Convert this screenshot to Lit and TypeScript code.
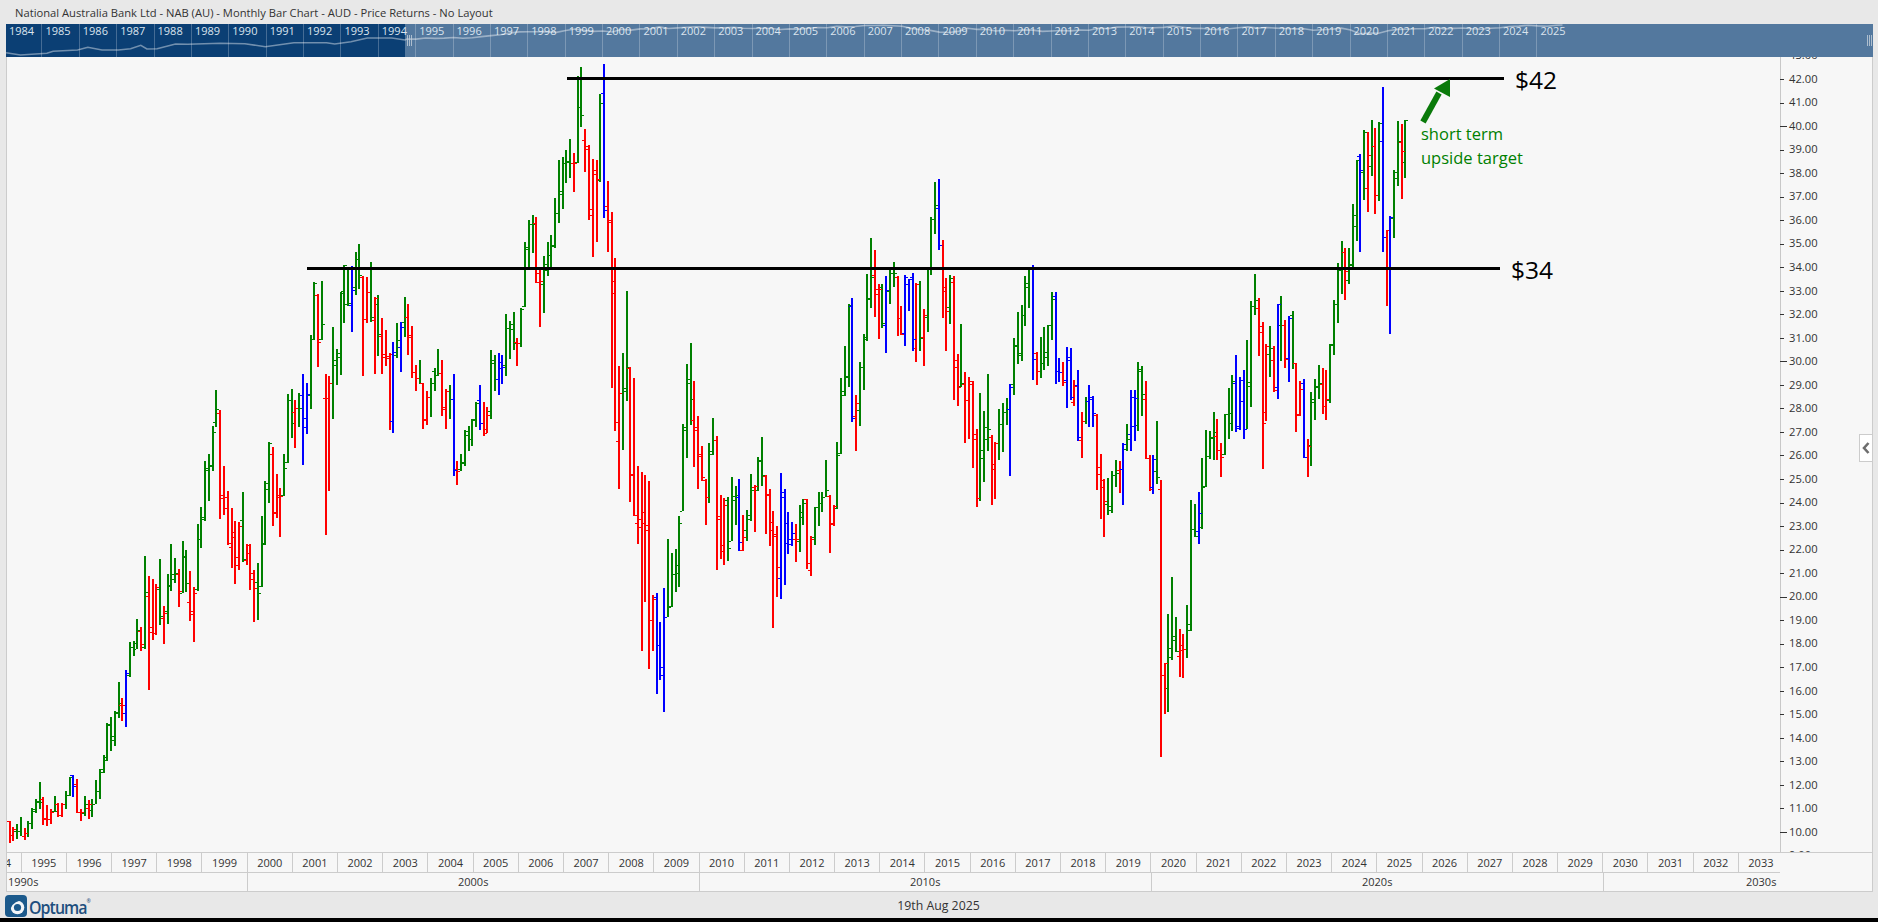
import { LitElement, html, css, svg } from "lit";
import { customElement } from "lit/decorators.js";

interface Seg { x0: number; y0: number; sy: number; d: string; }
const SEGS: Seg[] = [
{ x0: 0, y0: 380, sy: 3, d: `
30 r 1322 1390 1322 1365
39 r 1342 1382 1365 1348
51 g 1332 1376 1352 1352
63 g 1312 1368 1352 1368
75 r 1344 1380 1368 1358
84 g 1324 1370 1358 1328
96 g 1284 1346 1328 1286
108 g 1258 1300 1292 1262
120 g 1206 1288 1265 1265
129 r 1252 1334 1258 1314
141 r 1276 1338 1318 1318
153 r 1288 1332 1318 1296
165 g 1248 1296 1294 1292
174 r 1270 1312 1272 1306
186 r 1270 1312 1306 1272
198 g 1232 1286 1272 1246
210 g 1190 1248 1246 1192
219 b 1186 1250 1186 1218
231 r 1198 1298 1212 1296
243 r 1288 1322 1296 1296
255 g 1248 1308 1298 1272
267 r 1260 1316 1284 1272
276 g 1258 1310 1290 1272
288 g 1200 1272 1272 1234
300 g 1168 1256 1234 1168
312 g 1126 1178 1176 1130
321 g 1030 1144 1140 1032
333 g 1012 1112 1034 1068
345 g 994 1098 1080 996
357 g 906 1014 998 970
366 r 954 1022 976 976
378 b 870 1040 998 880
390 g 786 892 884 800
402 g 784 828 800 788
411 g 718 808 806 750
423 r 742 812 752 792
435 g 528 806 802 636
447 r 588 930 648 756
459 r 598 780 742 760
468 r 612 764 760 622
480 g 538 734 626 708
492 r 678 792 714 698
504 g 582 732 692 616
513 g 492 632 618 598
525 g 534 608 582 578
537 r 568 680 582 632
549 g 484 640 638 528
558 g 510 636 532 608
570 r 574 722 666 692
582 r 622 786 702 638
594 g 432 632 628 476
603 g 382 504 476 412
615 g 244 422 418 270
627 g 222 362 264 258
639 g 138 272 256 156
648 g 30 140 126 86
660 r 90 416 98 354
672 r 258 404 344 384
684 r 334 494 350 490
696 r 384 564 500 456
705 r 424 612 470 554
717 r 426 570 530 438
729 g 336 546 420 536
741 r 492 554 540 494
750 r 492 630 518 598
762 r 570 726 578 624
774 g 550 720 606 638
786 g 408 620 618 488
795 g 304 496 492 308
807 g 186 368 326 188
819 r 202 438 222 398
831 r 282 414 396 344
840 r 324 470 352 348
852 g 222 348 344 264
864 g 42 248 246 60
876 g 28 174 60 128
885 r 60 204 96 84
897 g 40 140 84 84
` },
{ x0: 290, y0: 60, sy: 3, d: `
39 b 942 1215 1004 1100
51 b 968 1122 1074 1002
63 g 826 1048 1006 838
73 g 666 840 836 668
84 r 702 920 706 846
96 g 664 840 836 792
108 r 942 1425 1014 1014
117 r 948 1293 1014 968
129 g 802 1076 968 900
141 g 868 974 914 880
153 g 696 944 890 700
162 g 616 788 692 616
174 g 626 738 732 728
186 b 618 816 734 690
198 g 576 704 680 596
207 g 552 686 596 645
219 r 648 948 650 776
231 r 652 788 776 696
243 g 606 786 696 772
255 r 712 942 780 714
264 g 706 888 732 822
276 r 774 942 828 890
288 r 810 918 882 894
300 r 880 1110 888 882
309 b 846 1118 1082 876
321 g 790 894 886 840
333 b 786 936 860 800
345 g 712 830 786 772
354 r 732 884 770 830
366 r 798 954 826 936
378 r 916 992 936 954
390 g 900 972 954 968
399 r 970 1106 970 1080
411 r 994 1094 1076 1012
423 g 954 1070 1012 968
435 g 924 992 932 946
444 g 868 948 944 940
456 r 900 1068 938 1040
468 r 988 1106 1046 992
480 g 976 1076 992 1018
492 b 942 1248 1018 1230
501 r 1204 1275 1228 1232
513 g 1182 1232 1228 1210
525 g 1110 1218 1206 1124
537 g 1098 1172 1112 1136
546 g 1078 1158 1136 1080
558 g 1026 1100 1076 1030
570 b 976 1110 1020 1090
582 r 1026 1128 1090 1120
591 r 1040 1118 1106 1064
603 g 870 1076 1052 910
615 g 884 992 900 956
627 b 880 1004 956 906
636 b 886 972 924 920
648 g 762 948 914 804
660 g 784 896 804 808
672 g 756 870 792 848
681 r 834 918 846 848
693 g 744 860 848 746
705 g 546 740 738 562
717 g 480 622 566 492
729 g 466 578 492 492
738 r 472 668 488 666
750 r 626 800 638 664
762 g 588 758 672 612
774 g 546 648 630 586
783 g 526 622 586 558
795 g 414 564 554 458
807 g 300 488 458 392
819 g 292 446 402 308
828 g 270 368 308 306
840 g 238 354 304 310
852 r 278 396 308 308
864 g 48 308 306 140
873 g 22 200 142 164
885 r 208 336 240 266
897 r 256 480 258 446
909 r 298 590 466 342
921 r 300 546 330 356
930 g 102 366 360 128
942 b 12 474 100 450
954 r 364 576 438 486
` },
{ x0: 590, y0: 230, sy: 3, d: `
66 r -54 474 -30 152
75 r 84 602 188 576
87 r 408 776 632 488
99 g 370 660 488 482
111 g 184 512 474 410
120 r 412 816 414 732
132 r 444 858 736 854
144 r 708 942 878 866
156 r 726 1262 892 846
165 r 736 1116 880 900
177 r 752 1316 886 1170
189 r 1096 1262 1170 1108
201 b 1090 1392 1102 1244
210 b 1176 1350 1244 1310
222 b 1074 1446 1334 1160
234 g 928 1162 1160 1128
246 g 970 1132 1130 1032
258 g 958 1086 1032 1004
267 g 858 1070 1030 878
279 g 582 844 842 600
291 g 402 684 590 446
303 g 340 584 458 506
312 r 454 710 570 590
324 r 558 776 600 672
336 r 648 752 678 740
348 r 748 884 750 802
357 g 640 818 800 662
369 g 564 674 672 630
381 r 618 1020 630 858
393 r 796 986 866 946
402 r 804 1004 964 824
414 g 802 992 810 954
426 g 742 934 932 810
438 g 768 884 798 796
447 b 748 962 802 936
459 r 856 962 960 920
471 g 840 932 900 856
483 g 732 872 868 780
495 r 766 906 770 768
504 g 682 782 780 692
516 g 622 768 690 734
528 r 736 912 738 792
540 r 778 948 794 876
549 r 844 1194 900 918
561 r 888 1102 912 1010
573 b 730 1106 1044 786
585 b 778 1064 802 940
594 b 846 972 880 942
606 b 876 948 928 910
618 r 882 996 926 926
630 g 826 966 934 862
639 g 808 884 846 818
651 r 808 1016 808 1000
663 r 918 1038 1020 928
675 g 830 944 922 832
687 g 786 888 832 818
696 g 786 846 818 800
708 g 690 802 800 780
720 r 796 968 798 878
732 r 826 888 882 828
741 g 636 836 834 674
753 g 444 672 668 482
765 g 348 498 494 438
777 g 222 470 440 226
786 b 204 576 228 564
798 r 496 662 558 518
810 g 396 588 540 412
822 g 312 480 412 322
831 g 132 332 326 206
843 g 24 234 204 140
855 r 60 262 134 192
867 r 162 326 178 176
876 g 162 294 170 278
888 b 138 368 284 180
900 g 112 222 182 130
912 g 96 172 130 130
924 r 138 318 140 264
933 r 228 316 264 312
945 b 136 348 310 140
` },
{ x0: 890, y0: 170, sy: 3, d: `
57 b 326 422 342 328
69 b 310 542 322 506
78 r 340 576 534 342
90 g 334 542 342 504
102 r 418 588 502 434
114 g 298 486 442 298
123 g 142 314 298 146
135 g 36 192 146 104
147 b 28 240 114 224
159 r 210 444 224 364
168 r 324 542 352 422
180 g 316 462 412 324
192 r 318 690 336 570
204 r 552 708 590 650
213 g 462 650 648 638
225 r 606 818 642 690
237 r 622 806 690 634
249 r 632 894 642 806
261 r 778 1010 792 984
270 g 670 992 984 840
282 g 724 936 864 772
294 g 612 842 806 776
306 r 796 1004 800 882
315 r 816 986 896 818
327 g 716 870 818 762
339 g 700 846 762 726
351 g 684 764 726 716
360 b 642 918 716 652
372 g 504 674 642 526
384 g 426 582 528 550
396 g 406 572 556 436
405 g 318 468 436 338
417 g 298 414 350 298
429 b 285 630 296 566
441 r 546 644 550 602
453 g 500 624 602 578
462 g 470 600 578 560
474 g 466 588 546 466
486 g 366 510 464 386
498 b 366 642 378 604
507 b 564 636 604 606
519 r 576 648 606 636
531 b 532 714 630 560
543 b 534 690 570 680
552 r 630 708 696 648
564 b 600 812 646 800
576 r 726 864 810 754
588 g 682 762 752 692
597 b 644 770 694 688
609 b 678 770 680 728
621 r 732 960 734 912
633 r 852 1046 890 952
642 r 928 1100 930 992
654 g 924 1034 1002 1008
666 g 904 1030 1020 916
678 g 870 950 916 908
690 r 874 968 900 898
699 b 820 1004 896 822
711 g 762 842 836 806
723 b 660 842 792 680
735 b 660 812 768 684
744 g 576 782 764 596
756 g 588 738 604 672
768 r 634 866 688 864
780 r 856 962 864 958
789 b 856 972 952 866
801 g 754 942 902 920
` },
{ x0: 1140, y0: 80, sy: 2.2725, d: `
63 r 910 1538 930 1352
75 r 1324 1440 1352 1326
84 g 1214 1436 1382 1290
96 g 1130 1318 1312 1272
108 g 1220 1300 1264 1298
120 r 1248 1356 1310 1284
129 r 1258 1358 1296 1294
141 g 1192 1314 1292 1250
153 g 954 1252 1236 1020
165 g 964 1038 1020 1036
177 b 936 1054 1026 984
186 g 860 1020 1016 926
198 g 796 924 922 854
210 g 798 862 854 814
222 g 754 864 812 800
231 r 770 864 810 840
243 r 826 902 840 856
255 g 758 852 850 760
267 g 700 816 758 756
276 g 670 798 780 684
288 b 626 800 688 786
300 b 674 796 790 730
312 b 658 816 682 792
321 g 590 794 792 696
333 g 502 744 686 514
345 g 440 534 514 500
357 r 496 628 518 572
369 r 550 884 558 780
378 r 600 776 754 604
390 g 560 674 622 608
402 r 604 710 636 704
414 b 508 726 698 510
423 g 490 638 556 556
435 r 546 654 556 634
447 b 536 686 632 540
459 g 526 656 534 642
468 r 642 800 644 762
480 r 684 764 758 702
492 b 680 860 688 856
504 r 816 902 856 832
513 g 710 878 830 724
525 g 680 772 732 696
537 g 648 726 698 688
549 r 654 758 690 740
558 r 660 772 740 724
570 g 600 734 728 602
582 g 500 626 600 510
594 g 416 552 510 432
606 g 366 486 428 390
615 r 382 500 390 434
627 g 382 464 454 418
639 g 282 428 420 306
651 g 182 366 332 182
660 b 168 390 172 204
672 g 114 272 208 118
684 r 118 300 246 170
696 g 92 218 196 150
705 r 108 304 150 262
717 g 96 274 262 98
729 b 16 390 138 356
741 r 340 514 356 342
750 b 310 578 428 312
762 g 204 360 314 210
774 g 94 240 222 138
786 r 100 270 142 162
795 g 90 222 186 92
` },
];

interface Bar { x: number; c: string; t: number; b: number; o: number; cl: number; }
const BARS: Bar[] = [];
for (const s of SEGS) {
  const n = s.d.trim().split(/\s+/);
  for (let i = 0; i + 5 < n.length; i += 6) {
    const y = (v: string) => Math.round(s.y0 + Number(v) / s.sy);
    BARS.push({ x: s.x0 + Number(n[i]) / 3, c: n[i + 1], t: y(n[i + 2]), b: y(n[i + 3]), o: y(n[i + 4]), cl: y(n[i + 5]) });
  }
}
const COLORS: Record<string, string> = { g: "#008000", r: "#ff0000", b: "#0000ff" };
function barPath(c: string): string {
  let d = "";
  for (const b of BARS) {
    if (b.c !== c) continue;
    const l = Math.round(b.x - 1);
    d += `M${l} ${b.t}h2V${b.b}h-2zM${l - 2} ${b.o}h2v1h-2zM${l + 2} ${b.cl}h2v1h-2z`;
  }
  return d;
}

const priceY = (p: number) => 79 + (42 - p) * 23.53;
const PRICES: number[] = [];
for (let p = 43; p >= 9; p--) PRICES.push(p);

const X2000 = 247.7, YEAR_W = 45.2;
const YEARS: number[] = [];
for (let y = 1994; y <= 2033; y++) YEARS.push(y);
const DECADES = [
  { label: "1990s", w: X2000 - 7, cls: "left" },
  { label: "2000s", w: 452, cls: "" },
  { label: "2010s", w: 452, cls: "" },
  { label: "2020s", w: 452, cls: "" },
  { label: "2030s", w: 316, cls: "" },
];
const NAV_YEARS: number[] = [];
for (let y = 1984; y <= 2025; y++) NAV_YEARS.push(y);
const navX = (yr: number) => 42.4 + (yr - 1985) * 37.38;

const EARLY: [number, number][] = [[15,158],[50,165],[115,160],[130,154],[190,150],[215,142],[250,150],[290,150],[320,146],[345,136],[360,147],[385,146],[430,132],[460,133],[540,130],[600,131],[650,140],[720,128],[800,128],[820,132],[860,125],[900,114],[960,114],[992,120]];
function sparkPath(): string {
  const pts = EARLY.map(([x, y]) => `${(x / 2.45).toFixed(1)},${(y / 3).toFixed(1)}`);
  BARS.forEach((b, i) => {
    if (i % 3 !== 0 && i !== BARS.length - 1) return;
    const p = 10 + (832 - b.cl) / 23.53;
    const x = navX(1994.75 + i / 12);
    const y = 39 - (Math.log(p) - 2.3) * 10;
    pts.push(`${x.toFixed(1)},${y.toFixed(1)}`);
  });
  return "M" + pts.join("L");
}

@customElement("app-root")
export class AppRoot extends LitElement {
  static styles = css`
    :host {
      display: flex;
      flex-direction: column;
      height: 100vh;
      background: #e8e8e8;
      font-family: "Open Sans", sans-serif;
      color: #333;
      overflow: hidden;
    }
    .title {
      height: 24px;
      flex: none;
      display: flex;
      align-items: center;
      padding-left: 15px;
      font-size: 11.2px;
      color: #333;
    }
    .body {
      flex: 1;
      display: flex;
      flex-direction: column;
      padding: 0 5px 0 6px;
      min-height: 0;
    }
    .nav {
      position: relative;
      height: 33px;
      flex: none;
      background: #53789e;
      display: flex;
      overflow: hidden;
    }
    .nav-dark {
      position: absolute;
      left: 0;
      top: 0;
      bottom: 0;
      width: 399px;
      background: #0b3f74;
    }
    .nav-year {
      position: relative;
      flex: none;
      box-sizing: border-box;
      border-right: 1px solid rgba(255, 255, 255, 0.24);
      padding: 0 0 0 3px;
      font-size: 11px;
      line-height: 14px;
      color: #dbe4ee;
    }
    .nav-year.last { border-right: none; }
    .nav-svg { position: absolute; left: 0; top: 0; }
    .frame {
      flex: none;
      display: flex;
      flex-direction: column;
      border-left: 1px solid #ccc;
      border-right: 1px solid #ccc;
    }
    .plot-row {
      position: relative;
      height: 795px;
      display: flex;
      background: #f7f7f7;
    }
    .plot { display: block; flex: none; }
    .axis { display: block; flex: none; }
    .collapse {
      position: absolute;
      right: 0;
      top: 377px;
      width: 13px;
      height: 28px;
      box-sizing: border-box;
      background: #fff;
      border: 1px solid #ccc;
      border-right: none;
      display: flex;
      align-items: center;
      justify-content: center;
    }
    .years-wrap {
      height: 21px;
      box-sizing: border-box;
      border-top: 1px solid #ccc;
      background: #f7f7f7;
    }
    .years {
      width: 1773px;
      height: 20px;
      box-sizing: border-box;
      border-bottom: 1px solid #ccc;
      display: flex;
      overflow: hidden;
    }
    .year {
      flex: none;
      box-sizing: border-box;
      border-right: 1px solid #ccc;
      text-align: center;
      font-size: 11px;
      line-height: 19px;
      white-space: nowrap;
    }
    .decades {
      height: 19px;
      box-sizing: border-box;
      border-bottom: 1px solid #ccc;
      display: flex;
      overflow: hidden;
      background: #f7f7f7;
    }
    .decade {
      flex: none;
      box-sizing: border-box;
      border-right: 1px solid #ccc;
      text-align: center;
      font-size: 11px;
      line-height: 17px;
    }
    .decade.left { text-align: left; padding-left: 1px; }
    .foot {
      height: 26px;
      flex: none;
      position: relative;
      display: flex;
      align-items: center;
      justify-content: center;
      font-size: 12.3px;
    }
    .logo {
      position: absolute;
      left: -1px;
      top: 3px;
      display: flex;
      align-items: center;
      gap: 2px;
      color: #1e4f7e;
      font-family: "Open Sans", sans-serif;
      font-weight: 600;
      font-size: 18.5px;
      letter-spacing: -1.1px;
      line-height: 21px;
    }
    .logo-name { display: flex; transform: scaleX(0.86); transform-origin: left center; }
    .logo sup { font-size: 6px; line-height: 0; margin-top: 5px; letter-spacing: 0; }
    .date { transform: translateX(-1px); }
    .bottom { height: 4px; flex: none; background: #000; }
    .note { fill: #008000; font-size: 16.5px; }
    .level { fill: #000; font-size: 24.5px; }
    .tick-label { fill: #333; font-size: 11.2px; }
  `;

  render() {
    const spark = sparkPath();
    return html`
      <div class="title">National Australia Bank Ltd - NAB (AU) - Monthly Bar Chart - AUD - Price Returns - No Layout</div>
      <div class="body">
        <div class="nav">
          <div class="nav-dark"></div>
          ${NAV_YEARS.map((y, i) => {
            const start = i === 0 ? 6 : navX(y);
            const w = navX(y + 1) - start;
            return html`<div class="nav-year ${y === 2025 ? "last" : ""}" style="width:${w.toFixed(2)}px">${y}</div>`;
          })}
          <svg class="nav-svg" width="1867" height="33" viewBox="6 24 1867 33">
            <path d=${spark} fill="none" stroke="#ffffff" stroke-opacity="0.42" stroke-width="1.6"></path>
            <path d="M407.5 35v11M409.5 35v11M411.5 35v11M1867.5 35v11M1869.5 35v11M1871.5 35v11" stroke="#c5cfda" stroke-opacity="0.8" stroke-width="1"></path>
          </svg>
        </div>
        <div class="frame">
          <div class="plot-row">
            <svg class="plot" width="1773" height="795" viewBox="7 57 1773 795">
              <g shape-rendering="crispEdges">
                ${["g", "r", "b"].map((c) => svg`<path d=${barPath(c)} fill=${COLORS[c]}></path>`)}
                <rect x="567" y="77" width="937" height="3" fill="#000"></rect>
                <rect x="307" y="267" width="1193" height="3" fill="#000"></rect>
              </g>
              <path d="M1423 122L1439 93" stroke="#0a7a0a" stroke-width="6" fill="none"></path>
              <path d="M1450 79L1434 88.5L1450 97z" fill="#0a7a0a"></path>
              <text class="level" x="1515" y="89">$42</text>
              <text class="level" x="1511" y="279">$34</text>
              <text class="note" x="1421" y="140">short term</text>
              <text class="note" x="1421" y="164">upside target</text>
            </svg>
            <svg class="axis" width="92" height="795" viewBox="1780 57 92 795">
              <g shape-rendering="crispEdges">
                <rect x="1780" y="57" width="1" height="795" fill="#c8c8c8"></rect>
                ${PRICES.map((p) => {
                  const y = Math.round(priceY(p));
                  return svg`<rect x="1780" y=${y} width=${p % 10 === 0 ? 7 : 4} height="1" fill="#333"></rect>`;
                })}
              </g>
              ${PRICES.map((p) => svg`<text class="tick-label" x="1789" y=${(priceY(p) + 3.7).toFixed(1)}>${p.toFixed(2)}</text>`)}
            </svg>
            <div class="collapse">
              <svg width="8" height="12" viewBox="0 0 8 12"><path d="M6.5 1L2 6l4.5 5" fill="none" stroke="#6e6e6e" stroke-width="2.6"></path></svg>
            </div>
          </div>
          <div class="years-wrap">
            <div class="years">
              ${YEARS.map((y) => {
                const l = X2000 + (y - 2000) * YEAR_W;
                const m = y === 1994 ? `margin-left:${(l - 7).toFixed(2)}px;` : "";
                return html`<div class="year" style="${m}width:${YEAR_W}px">${y}</div>`;
              })}
            </div>
          </div>
          <div class="decades">
            ${DECADES.map((d) => html`<div class="decade ${d.cls}" style="width:${d.w}px">${d.label}</div>`)}
          </div>
        </div>
        <div class="foot">
          <div class="logo">
            <svg width="22" height="22" viewBox="0 0 22 22">
              <rect width="22" height="22" rx="4" fill="#1c5a8c"></rect>
              <circle cx="12.5" cy="12.5" r="6.8" fill="#f2f5f8"></circle>
              <circle cx="12.5" cy="12.5" r="3.6" fill="#1c5a8c"></circle>
              <path d="M3.5 19C4 11 8 6 15 4.5" fill="none" stroke="#1c5a8c" stroke-width="2"></path>
            </svg>
            <div class="logo-name"><span>Optuma</span><sup>®</sup></div>
          </div>
          <span class="date">19th Aug 2025</span>
        </div>
      </div>
      <div class="bottom"></div>
    `;
  }
}
